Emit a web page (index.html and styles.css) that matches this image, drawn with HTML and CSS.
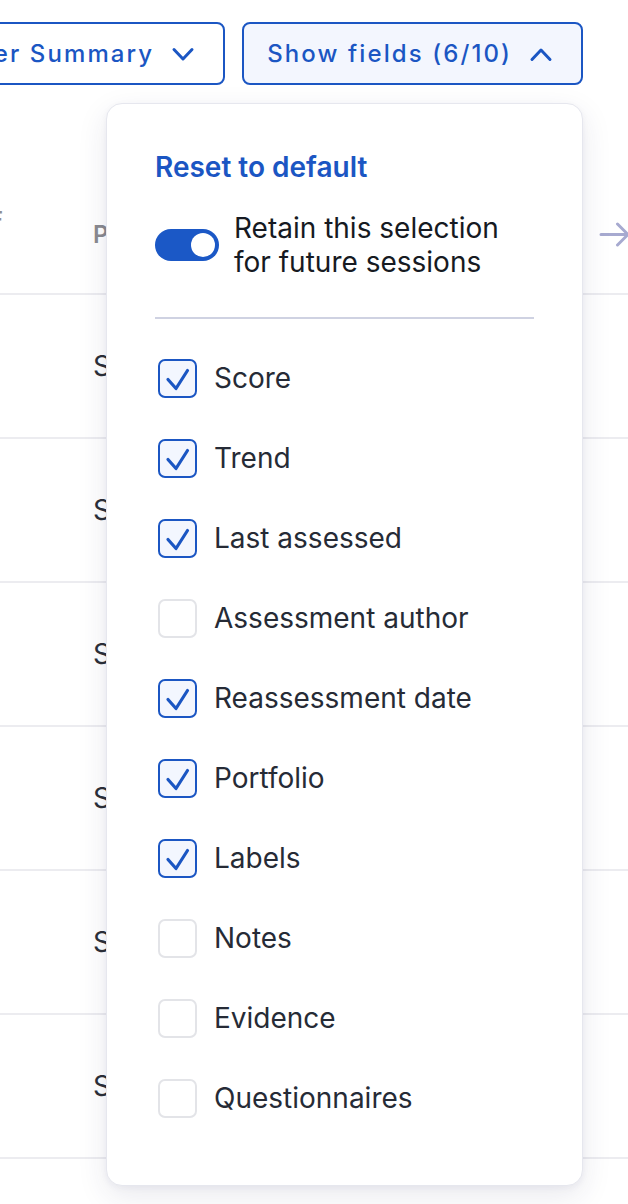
FILE: index.html
```html
<!DOCTYPE html>
<html lang="en">
<head>
<meta charset="utf-8">
<title>Show fields</title>
<link rel="stylesheet" href="styles.css">
</head>
<body>
<div class="page">
  <div class="toolbar">
    <button class="btn">Register Summary
      <svg class="chev" viewBox="0 0 24 24" width="24" height="24"><path d="M3 7.5 L12 17 L21 7.5"/></svg>
    </button>
    <div class="dropdown">
      <button class="btn btn--active">Show fields (6/10)
        <svg class="chev" viewBox="0 0 24 24" width="24" height="24"><path d="M3 17.5 L12 8 L21 17.5"/></svg>
      </button>
      <div class="panel">
        <a class="reset" href="#">Reset to default</a>
        <div class="retain">
          <span class="toggle"><span class="knob"></span></span>
          <span class="retain-text">Retain this selection<br>for future sessions</span>
        </div>
        <div class="divider"></div>
        <ul class="fields">
          <li class="field"><span class="box box--on"><svg viewBox="0 0 35 35"><path d="M8 18.5 L16 27.5 L27.5 9.5"/></svg></span><span class="label">Score</span></li>
          <li class="field"><span class="box box--on"><svg viewBox="0 0 35 35"><path d="M8 18.5 L16 27.5 L27.5 9.5"/></svg></span><span class="label">Trend</span></li>
          <li class="field"><span class="box box--on"><svg viewBox="0 0 35 35"><path d="M8 18.5 L16 27.5 L27.5 9.5"/></svg></span><span class="label">Last assessed</span></li>
          <li class="field"><span class="box"></span><span class="label">Assessment author</span></li>
          <li class="field"><span class="box box--on"><svg viewBox="0 0 35 35"><path d="M8 18.5 L16 27.5 L27.5 9.5"/></svg></span><span class="label">Reassessment date</span></li>
          <li class="field"><span class="box box--on"><svg viewBox="0 0 35 35"><path d="M8 18.5 L16 27.5 L27.5 9.5"/></svg></span><span class="label">Portfolio</span></li>
          <li class="field"><span class="box box--on"><svg viewBox="0 0 35 35"><path d="M8 18.5 L16 27.5 L27.5 9.5"/></svg></span><span class="label">Labels</span></li>
          <li class="field"><span class="box"></span><span class="label">Notes</span></li>
          <li class="field"><span class="box"></span><span class="label">Evidence</span></li>
          <li class="field"><span class="box"></span><span class="label">Questionnaires</span></li>
        </ul>
      </div>
    </div>
  </div>

  <div class="table">
    <div class="row row--head">
      <div class="cell cell--first"><span class="head-l1">BRIEF</span><span class="head-l2">DUE</span></div>
      <div class="cell cell--main head">PRIORITY</div>
      <div class="cell cell--arrow">
        <svg class="arrow" viewBox="0 0 32 32" width="32" height="32"><path d="M3 12.5 H30 M19.5 2 L30 12.5 L19.5 23"/></svg>
      </div>
    </div>
    <div class="row"><div class="cell cell--first"></div><div class="cell cell--main">Supplier</div></div>
    <div class="row"><div class="cell cell--first"></div><div class="cell cell--main">Supplier</div></div>
    <div class="row"><div class="cell cell--first"></div><div class="cell cell--main">Supplier</div></div>
    <div class="row"><div class="cell cell--first"></div><div class="cell cell--main">Supplier</div></div>
    <div class="row"><div class="cell cell--first"></div><div class="cell cell--main">Supplier</div></div>
    <div class="row"><div class="cell cell--first"></div><div class="cell cell--main">Supplier</div></div>
    <div class="row"><div class="cell cell--first"></div><div class="cell cell--main">Supplier</div></div>
  </div>
</div>
</body>
</html>
```

FILE: styles.css
```css
* { box-sizing: border-box; }

html, body {
  margin: 0;
  padding: 0;
  background: #ffffff;
  overflow: hidden;
}

body {
  font-family: Inter, "Noto Sans", "Liberation Sans", sans-serif;
  color: #262b36;
  width: 628px;
  height: 1204px;
}

.page {
  position: relative;
  width: 628px;
  height: 1204px;
  overflow: hidden;
}

/* toolbar */
.toolbar {
  display: flex;
  justify-content: flex-end;
  align-items: flex-start;
  gap: 17px;
  padding: 22px 45px 0 0;
  position: relative;
  z-index: 2;
}

.btn {
  flex: none;
  display: flex;
  align-items: center;
  gap: 17px;
  height: 63px;
  padding: 0 28px 0 23px;
  border: 2px solid #1b56c3;
  border-radius: 8px;
  background: #ffffff;
  color: #1b56c3;
  font-family: Inter, "Noto Sans", sans-serif;
  font-size: 24px;
  font-weight: 500;
  letter-spacing: 2.1px;
  white-space: nowrap;
}

.btn--active {
  background: #f3f6fe;
}

.chev {
  flex: none;
  fill: none;
  stroke: #1b56c3;
  stroke-width: 3;
  stroke-linecap: round;
  stroke-linejoin: round;
}

.dropdown {
  position: relative;
  flex: none;
}

/* panel */
.panel {
  position: absolute;
  top: 81px;
  right: 0;
  width: 477px;
  height: 1083px;
  padding: 46px 48px 47px 48px;
  background: #ffffff;
  border: 1px solid #e6e7ee;
  border-radius: 16px;
  box-shadow: 0 10px 30px rgba(40, 44, 90, 0.10), 0 2px 6px rgba(40, 44, 90, 0.05);
}

.reset {
  display: block;
  font-size: 28px;
  line-height: 34px;
  font-weight: 600;
  color: #1b56c3;
  text-decoration: none;
}

.retain {
  display: flex;
  align-items: center;
  gap: 15px;
  margin-top: 27px;
}

.toggle {
  flex: none;
  display: flex;
  justify-content: flex-end;
  align-items: center;
  width: 64px;
  height: 32px;
  padding: 0 4px;
  border-radius: 16px;
  background: #1b58c6;
}

.knob {
  width: 24px;
  height: 24px;
  border-radius: 50%;
  background: #ffffff;
}

.retain-text {
  font-size: 28px;
  line-height: 34px;
  color: #161a22;
}

.divider {
  height: 2px;
  background: #cfd2e2;
  margin-top: 38px;
}

.fields {
  list-style: none;
  margin: 19px 0 0 0;
  padding: 0;
}

.field {
  display: flex;
  align-items: center;
  gap: 17px;
  height: 80px;
  padding-left: 3px;
}

.box {
  flex: none;
  display: flex;
  width: 39px;
  height: 39px;
  border: 2px solid #e3e4e8;
  border-radius: 7px;
  background: #ffffff;
}

.box--on {
  border-color: #1b56c3;
  background: #f3f6fe;
}

.box svg {
  width: 35px;
  height: 35px;
  fill: none;
  stroke: #1b56c3;
  stroke-width: 3.2;
  stroke-linecap: round;
  stroke-linejoin: round;
}

.label {
  font-size: 28px;
  line-height: 34px;
  color: #262b36;
}

/* background table */
.table {
  margin-top: 90px;
  position: relative;
  z-index: 1;
}

.row {
  display: flex;
  align-items: center;
  height: 144px;
  border-bottom: 2px solid #ececf0;
}

.row--head {
  height: 120px;
}

.cell--first {
  flex: none;
  width: 93px;
  display: flex;
  flex-direction: column;
  align-items: flex-end;
  padding-right: 90px;
  color: #8e8e93;
  font-size: 22px;
  font-weight: 600;
  line-height: 30px;
}

.head-l2 {
  margin-right: 30px;
}

.cell--main {
  flex: 1;
  font-size: 28px;
  color: #2b2f38;
  white-space: nowrap;
}

.head {
  font-size: 24px;
  font-weight: 600;
  color: #8a8a90;
  letter-spacing: 1px;
}

.cell--arrow {
  flex: none;
  width: 30px;
  padding-top: 8px;
}

.arrow {
  display: block;
  fill: none;
  stroke: #a7aad0;
  stroke-width: 3;
  stroke-linecap: round;
  stroke-linejoin: round;
}
```
